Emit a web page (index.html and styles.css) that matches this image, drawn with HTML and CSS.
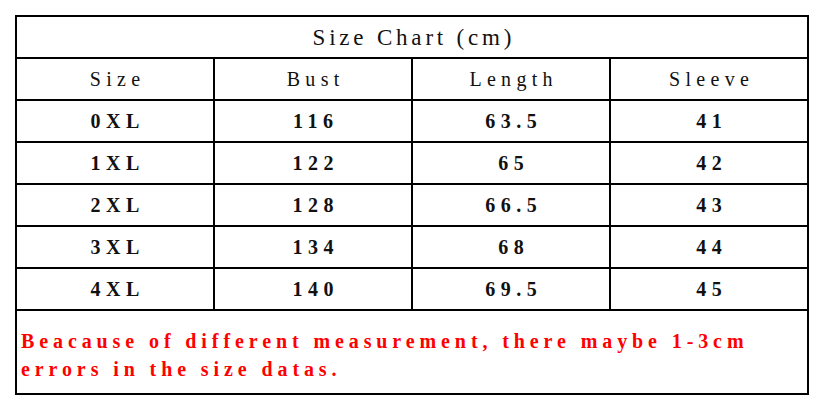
FILE: index.html
```html
<!DOCTYPE html>
<html>
<head>
<meta charset="utf-8">
<link rel="stylesheet" href="styles.css">
</head>
<body>
<div class="chart">
  <div class="cell title">Size Chart (cm)</div>
  <div class="cell head">Size</div>
  <div class="cell head">Bust</div>
  <div class="cell head">Length</div>
  <div class="cell head">Sleeve</div>
  <div class="cell">0XL</div><div class="cell">116</div><div class="cell">63.5</div><div class="cell">41</div>
  <div class="cell">1XL</div><div class="cell">122</div><div class="cell">65</div><div class="cell">42</div>
  <div class="cell">2XL</div><div class="cell">128</div><div class="cell">66.5</div><div class="cell">43</div>
  <div class="cell">3XL</div><div class="cell">134</div><div class="cell">68</div><div class="cell">44</div>
  <div class="cell">4XL</div><div class="cell">140</div><div class="cell">69.5</div><div class="cell">45</div>
  <div class="note">Beacause of different measurement, there maybe 1-3cm<br>errors in the size datas.</div>
</div>
</body>
</html>
```
FILE: styles.css
```css
html, body {
  margin: 0;
  padding: 0;
  background: #fff;
}
body {
  padding: 15px;
}
.chart {
  display: grid;
  grid-template-columns: repeat(4, 196px);
  grid-template-rows: repeat(7, 40px) 82px;
  gap: 2px;
  padding: 2px;
  background: #000;
  width: max-content;
  font-family: "Liberation Serif", serif;
  color: #111;
}
.cell {
  background: #fff;
  display: flex;
  align-items: center;
  justify-content: center;
  font-size: 20px;
  font-weight: bold;
  letter-spacing: 5.5px;
  padding-left: 5.5px;
}
.title {
  grid-column: 1 / -1;
  font-size: 23px;
  letter-spacing: 3.8px;
  padding-left: 3.8px;
  font-weight: normal;
  padding-top: 2px;
}
.head {
  letter-spacing: 5.3px;
  padding-left: 5.3px;
  font-weight: normal;
}
.note {
  grid-column: 1 / -1;
  background: #fff;
  color: #f00;
  font-size: 20px;
  line-height: 28px;
  letter-spacing: 4.9px;
  padding: 16px 0 0 4px;
  box-sizing: border-box;
  white-space: nowrap;
  font-weight: bold;
}
```
